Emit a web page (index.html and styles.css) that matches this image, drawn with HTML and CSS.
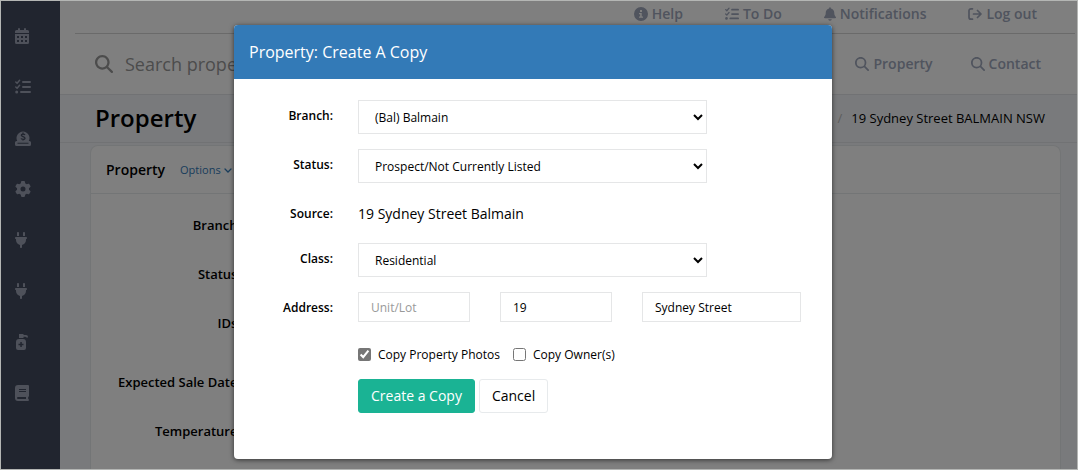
FILE: index.html
```html
<!DOCTYPE html>
<html lang="en">
<head>
  <meta charset="UTF-8" />
  <meta name="viewport" content="width=device-width, initial-scale=1.0"/>
  <title>Property: Create A Copy</title>
  <link rel="stylesheet" href="styles.css">
</head>
<body>

  <!-- shared icons -->
  <svg class="sprite" aria-hidden="true">
    <symbol id="search" viewBox="0 0 512 512"><path d="M416 208c0 45.900-14.900 88.300-40 122.700L502.600 457.400c12.500 12.500 12.500 32.800 0 45.300s-32.800 12.500-45.300 0L330.700 376c-34.400 25.200-76.800 40-122.700 40C93.100 416 0 322.900 0 208S93.100 0 208 0S416 93.100 416 208zM208 352a144 144 0 1 0 0-288 144 144 0 1 0 0 288z"/></symbol>
    <symbol id="tasks" viewBox="0 0 16 16"><path d="M.8 3l1.300 1.300L4.600 1.300M.8 8l1.300 1.300L4.600 6.300" fill="none" stroke="currentColor" stroke-width="1.500" stroke-linecap="round" stroke-linejoin="round"/><path d="M8 3h7M8 8h7M6 13h9" fill="none" stroke="currentColor" stroke-width="2" stroke-linecap="round"/><circle cx="1.700" cy="13" r="1.500"/></symbol>
    <symbol id="plug" viewBox="0 0 384 512"><path d="M96 0C78.300 0 64 14.300 64 32v96h64V32c0-17.700-14.300-32-32-32zM288 0c-17.700 0-32 14.300-32 32v96h64V32c0-17.700-14.300-32-32-32zM32 160c-17.700 0-32 14.300-32 32s14.300 32 32 32v32c0 77.400 55 142 128 156.800V480c0 17.700 14.300 32 32 32s32-14.300 32-32V412.800C297 398 352 333.400 352 256V224c17.700 0 32-14.300 32-32s-14.300-32-32-32H32z"/></symbol>
  </svg>

  <div class="app">
    <nav class="sidebar" aria-label="Main">
      <a href="#" aria-label="Calendar"><svg class="icon" width="14" height="16" viewBox="0 0 14 16"><path fill-rule="evenodd" d="M3 1a1 1 0 0 1 2 0v1h4V1a1 1 0 0 1 2 0v1h1.500A1.500 1.500 0 0 1 14 3.500V5H0V3.500A1.500 1.500 0 0 1 1.500 2H3zM0 6h14v8.500a1.500 1.500 0 0 1-1.500 1.500h-11A1.500 1.500 0 0 1 0 14.500zM2 8v2h2V8zM6 8v2h2V8zM10 8v2h2V8zM2 12v2h2v-2zM6 12v2h2v-2zM10 12v2h2v-2z"/></svg></a>
      <a href="#" aria-label="Tasks"><svg class="icon" width="16" height="16"><use href="#tasks"/></svg></a>
      <a href="#" aria-label="Sales"><svg class="icon" width="16" height="16" viewBox="0 0 16 16"><path fill-rule="evenodd" d="M1.500 11H2.200A6.500 6.500 0 1 1 13.800 11h.7A1.500 1.500 0 0 1 16 12.500v2a1.500 1.500 0 0 1-1.500 1.500h-13A1.500 1.500 0 0 1 0 14.500v-2A1.500 1.500 0 0 1 1.500 11zM2.500 12.700v1h11v-1z"/><path class="cut" d="M10 4.800C9.500 4 6.300 3.700 6.300 5.200S10 6.500 10 8.200 6.500 9.300 6 8.500M8 2.600v1.300M8 9.300v1.300"/></svg></a>
      <a href="#" aria-label="Settings"><svg class="icon" width="16" height="16" viewBox="0 0 512 512"><path d="M495.900 166.600c3.200 8.700 .5 18.400-6.400 24.600l-43.300 39.400c1.100 8.300 1.700 16.800 1.700 25.400s-.6 17.100-1.700 25.400l43.300 39.400c6.900 6.200 9.600 15.900 6.400 24.600c-4.400 11.900-9.700 23.300-15.800 34.300l-4.700 8.100c-6.600 11-14 21.400-22.100 31.200c-5.900 7.200-15.700 9.600-24.500 6.800l-55.700-17.700c-13.400 10.300-28.200 18.900-44 25.400l-12.500 57.100c-2 9.100-9 16.300-18.200 17.800c-13.800 2.300-28 3.500-42.500 3.500s-28.700-1.200-42.500-3.500c-9.200-1.500-16.200-8.700-18.200-17.800l-12.500-57.100c-15.800-6.500-30.600-15.100-44-25.400L83.100 425.900c-8.800 2.800-18.600 .3-24.500-6.800c-8.100-9.800-15.500-20.200-22.100-31.200l-4.700-8.100c-6.100-11-11.400-22.400-15.800-34.300c-3.200-8.700-.5-18.400 6.400-24.600l43.300-39.400C64.600 273.100 64 264.600 64 256s.6-17.100 1.700-25.400L22.400 191.200c-6.900-6.200-9.600-15.900-6.400-24.600c4.400-11.900 9.700-23.300 15.800-34.300l4.700-8.100c6.600-11 14-21.400 22.100-31.200c5.900-7.200 15.700-9.600 24.500-6.800l55.700 17.700c13.400-10.300 28.200-18.900 44-25.400l12.500-57.100c2-9.100 9-16.300 18.200-17.800C227.300 1.200 241.500 0 256 0s28.700 1.200 42.500 3.500c9.200 1.500 16.200 8.700 18.200 17.800l12.500 57.100c15.800 6.500 30.600 15.100 44 25.400l55.700-17.700c8.800-2.800 18.600-.3 24.500 6.800c8.100 9.800 15.500 20.200 22.100 31.200l4.700 8.100c6.100 11 11.400 22.400 15.800 34.300zM256 336a80 80 0 1 0 0-160 80 80 0 1 0 0 160z"/></svg></a>
      <a href="#" aria-label="Connections"><svg class="icon" width="12" height="16"><use href="#plug"/></svg></a>
      <a href="#" aria-label="Integrations"><svg class="icon" width="12" height="16"><use href="#plug"/></svg></a>
      <a href="#" aria-label="Hygiene"><svg class="icon" width="13" height="16" viewBox="0 0 13 16"><path fill-rule="evenodd" d="M4 0h4.500v1H11a2 2 0 0 1 2 2v.5h-1.500A1.500 1.500 0 0 0 10 2.700H8.500V4H4zM4 5h4a3 3 0 0 1 3 3v6a2 2 0 0 1-2 2H3a2 2 0 0 1-2-2V8a3 3 0 0 1 3-3zM5.300 8v1.800H3.500v1.500h1.800V13h1.500v-1.700h1.700V9.800H6.800V8z"/></svg></a>
      <a href="#" aria-label="Reference"><svg class="icon" width="14" height="16" viewBox="0 0 14 16"><path fill-rule="evenodd" d="M3 0h10a1 1 0 0 1 1 1v10a1 1 0 0 1-.8 1v2H13a1 1 0 0 1 0 2H3a3 3 0 0 1-3-3V3a3 3 0 0 1 3-3zM4 4v1h7V4zM4 6v1h7V6zM3 12a1 1 0 0 0 0 2h8v-2z"/></svg></a>
    </nav>

    <main class="main">
      <div class="top">
        <nav class="links top-links" aria-label="Account">
          <a href="#"><svg class="icon" width="14" height="14" viewBox="0 0 14 14"><path fill-rule="evenodd" d="M7 0a7 7 0 1 1 0 14A7 7 0 0 1 7 0zM6 3v2h2V3zM5 6v1.300h1.200v2.200H5v1.300h4V9.500H7.700V6z"/></svg>Help</a>
          <a href="#"><svg class="icon" width="14" height="14"><use href="#tasks"/></svg>To Do</a>
          <a href="#"><svg class="icon" width="12" height="14" viewBox="0 0 448 512"><path d="M224 0c-17.700 0-32 14.300-32 32V51.200C119 66 64 130.600 64 208v18.800c0 47-17.300 92.400-48.500 127.600l-7.400 8.300c-8.400 9.400-10.400 22.900-5.300 34.400S19.400 416 32 416H416c12.600 0 24-7.400 29.200-18.900s3.100-25-5.300-34.400l-7.400-8.300C401.300 319.200 384 273.900 384 226.800V208c0-77.400-55-142-128-156.800V32c0-17.700-14.300-32-32-32zm45.300 493.300c12-12 18.700-28.300 18.700-45.300H224 160c0 17 6.700 33.300 18.700 45.300s28.300 18.700 45.300 18.700s33.300-6.700 45.300-18.700z"/></svg>Notifications</a>
          <a href="#"><svg class="icon" width="14" height="14" viewBox="0 0 14 14"><path d="M4.500 1.800H3A2 2 0 0 0 1 3.800v6.400a2 2 0 0 0 2 2h1.500M5.500 7h7M9.500 3.500L13 7l-3.500 3.500" fill="none" stroke="currentColor" stroke-width="1.700" stroke-linecap="round" stroke-linejoin="round"/></svg>Log out</a>
        </nav>
      </div>

      <div class="search-row">
        <label class="search"><svg class="icon" width="18" height="18"><use href="#search"/></svg><input type="text" aria-label="Search" placeholder="Search property"></label>
        <nav class="links" aria-label="Search for">
          <a href="#"><svg class="icon" width="14" height="14"><use href="#search"/></svg>Property</a>
          <a href="#"><svg class="icon" width="14" height="14"><use href="#search"/></svg>Contact</a>
        </nav>
      </div>

      <header class="page-heading">
        <h1>Property</h1>
        <div class="breadcrumb"><span class="slash">/</span><span>19 Sydney Street BALMAIN NSW</span></div>
      </header>

      <section class="card">
        <div class="card-title">
          <h2>Property</h2>
          <a href="#">Options <svg width="8" height="6" viewBox="0 0 8 6"><path d="M1 1l3 3 3-3" fill="none" stroke="currentColor" stroke-width="1.300" stroke-linecap="round"/></svg></a>
        </div>
        <div class="details">
          <div>Branch:</div>
          <div>Status:</div>
          <div class="tall">IDs:</div>
          <div>Expected Sale Date:</div>
          <div>Temperature:</div>
        </div>
      </section>
    </main>
  </div>

  <div class="overlay">
    <div class="modal" role="dialog" aria-labelledby="modalTitle">
      <h2 class="modal-header" id="modalTitle">Property: Create A Copy</h2>
      <form class="modal-body">
        <label class="name" for="branch">Branch:</label>
        <select class="control" id="branch"><option>(Bal) Balmain</option></select>

        <label class="name" for="status">Status:</label>
        <select class="control" id="status"><option>Prospect/Not Currently Listed</option></select>

        <div class="name">Source:</div>
        <div class="source">19 Sydney Street Balmain</div>

        <label class="name" for="class">Class:</label>
        <select class="control" id="class"><option>Residential</option></select>

        <label class="name" for="unit">Address:</label>
        <div class="address">
          <input class="control" id="unit" type="text" placeholder="Unit/Lot">
          <input class="control" type="text" aria-label="Street number" value="19">
          <input class="control" type="text" aria-label="Street name" value="Sydney Street">
        </div>

        <div class="checks">
          <label><input type="checkbox" checked>Copy Property Photos</label>
          <label><input type="checkbox">Copy Owner(s)</label>
        </div>

        <div class="buttons">
          <button type="button" class="button primary">Create a Copy</button>
          <button type="button" class="button">Cancel</button>
        </div>
      </form>
    </div>
  </div>

</body>
</html>
```
FILE: styles.css
```css
* {
  box-sizing: border-box;
}
body {
  font-family: "Open Sans", "Liberation Sans", sans-serif;
  font-size: 13px;
  color: #000;
  margin: 0;
  height: 100vh;
  overflow: hidden;
  position: relative;
  border: 1px solid #b4b6b4;
}
h1, h2 {
  margin: 0;
  font-weight: 600;
}
a {
  text-decoration: none;
}
.sprite {
  display: none;
}
.icon {
  fill: currentColor;
  flex: none;
}
.app {
  display: flex;
  height: 100%;
}

/* sidebar */
.sidebar {
  flex: none;
  width: 59px;
  background-color: #424a5e;
  color: #9ca2b4;
  display: flex;
  flex-direction: column;
  gap: 35px;
  padding: 27px 14px;
}
.sidebar a {
  display: flex;
  height: 16px;
  color: inherit;
}
.cut {
  fill: none;
  stroke: #424a5e;
  stroke-width: 1.3;
}

/* header */
.main {
  flex: 1;
  min-width: 0;
  display: flex;
  flex-direction: column;
  background-color: #f3f5f8;
}
.links {
  display: flex;
  gap: 38px;
}
.links a {
  display: flex;
  align-items: center;
  gap: 4px;
  font-size: 14px;
  line-height: 20px;
  font-weight: 600;
  color: #a0a8bc;
}
.top {
  background-color: #fff;
  padding: 0 2px 0 15px;
}
.top-links {
  justify-content: flex-end;
  gap: 42px;
  padding: 3px 38px 9px 0;
  border-bottom: 1px solid #d4d4d4;
}
.search-row {
  flex: none;
  display: flex;
  justify-content: space-between;
  align-items: center;
  height: 61px;
  padding: 0 36px 0 35px;
  background-color: #fff;
  border-bottom: 1px solid #e3e5e8;
}
.search {
  display: flex;
  align-items: center;
  gap: 12px;
  color: #999;
}
.search input {
  border: 0;
  padding: 0;
  background: none;
  font: inherit;
  font-size: 18px;
}
.search input::placeholder {
  color: #999;
}
.page-heading {
  flex: none;
  display: flex;
  justify-content: space-between;
  align-items: center;
  height: 48px;
  padding: 0 32px 2px 35px;
  border-bottom: 1px solid #e3e5e8;
}
.page-heading h1 {
  font-size: 24px;
}
.breadcrumb {
  display: flex;
  gap: 9px;
}
.slash {
  color: #bbb;
}

/* property card */
.card {
  flex: 1;
  min-height: 0;
  overflow: hidden;
  margin: 2px 16px 0 30px;
  background-color: #fff;
  border: 1px solid #e7eaec;
  border-bottom: 0;
  border-radius: 8px 8px 0 0;
}
.card-title {
  display: flex;
  align-items: center;
  gap: 15px;
  height: 48px;
  padding: 0 15px;
  border-bottom: 1px solid #e7eaec;
}
.card-title h2 {
  font-size: 14px;
}
.card-title a {
  font-size: 11px;
  color: #337ab7;
}
.details {
  width: 150px;
  padding-top: 22px;
  text-align: right;
  font-weight: 600;
  line-height: 18px;
  white-space: nowrap;
}
.details div {
  margin-bottom: 31px;
}
.details .tall {
  margin-bottom: 41px;
}
.details div:last-child {
  margin-bottom: 0;
}

/* modal */
.overlay {
  position: absolute;
  inset: 0;
  display: flex;
  justify-content: center;
  align-items: flex-start;
  padding: 24px 12px 0 0;
  background-color: rgba(0, 0, 0, 0.5);
}
.modal {
  width: 598px;
  background-color: #fff;
  border-radius: 4px;
  box-shadow: 0 1px 5px rgba(0, 0, 0, 0.6);
}
.modal-header {
  padding: 15px;
  font-size: 16px;
  line-height: 24px;
  font-weight: 400;
  color: #fff;
  background-color: #337ab7;
  border-radius: 4px 4px 0 0;
}
.modal-body {
  display: grid;
  grid-template-columns: 99px 1fr;
  column-gap: 25px;
  row-gap: 15px;
  padding: 21px 31px 46px 0;
}
.name {
  padding-top: 7px;
  font-size: 12px;
  line-height: 18px;
  font-weight: 600;
  text-align: right;
}
.control {
  width: 100%;
  height: 30px;
  padding: 6px 12px;
  border: 1px solid #e5e6e7;
  border-radius: 0;
  background-color: #fff;
  color: #000;
  font: inherit;
  font-size: 12px;
}
.control::placeholder {
  color: #999;
}
select.control {
  max-width: 349px;
  height: 34px;
}
.source {
  padding-top: 2px;
  font-size: 14px;
  line-height: 28px;
}
.address {
  display: grid;
  grid-template-columns: 112px 112px 1fr;
  gap: 30px;
}
.checks {
  grid-column: 2;
  display: flex;
  gap: 13px;
  padding-top: 8px;
  font-size: 12px;
  line-height: 19px;
}
.checks label {
  display: flex;
  align-items: center;
  gap: 7px;
}
.checks input {
  margin: 0;
  accent-color: #767676;
}
.buttons {
  grid-column: 2;
  display: flex;
  gap: 4px;
}
.button {
  padding: 6px 12px;
  border: 1px solid #e7eaec;
  border-radius: 3px;
  background-color: #fff;
  color: #000;
  font: inherit;
  font-size: 14px;
  line-height: 20px;
  cursor: pointer;
}
.primary {
  background-color: #1ab394;
  border-color: #1ab394;
  color: #fff;
}
```
